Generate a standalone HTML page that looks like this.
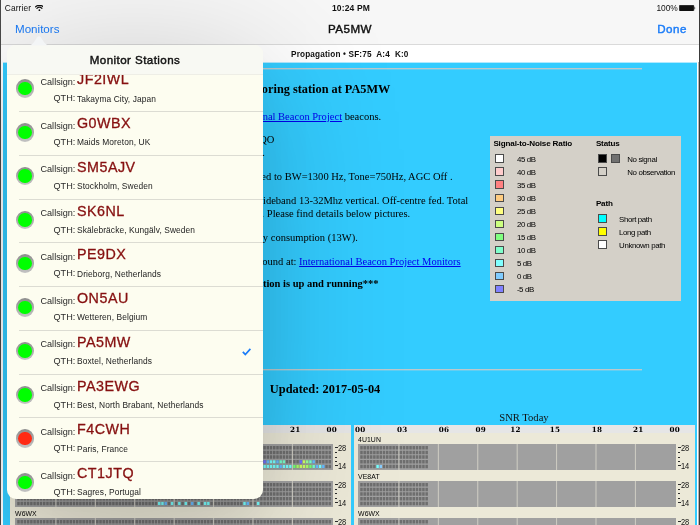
<!DOCTYPE html>
<html lang="en">
<head>
<meta charset="utf-8">
<title>PA5MW - Monitor Stations</title>
<style>
*{box-sizing:border-box;margin:0;padding:0}
html,body{width:700px;height:525px;overflow:hidden;background:#fff}
body{position:relative;font-family:"Liberation Sans",sans-serif;color:#000}
.abs{position:absolute}
body>*{will-change:transform}
#edgeL{left:0;top:0;width:1px;height:525px;background:#4a4a4a}
#edgeR{left:698px;top:0;width:2px;height:525px;background:linear-gradient(to right,#b4b4b4 0,#b4b4b4 1px,#3a3a3a 1px)}
#bar{left:1px;top:0;width:697.6px;height:44.9px;background:#f7f7f7;border-bottom:.8px solid #dadada}
#status{left:0;top:.8px;width:700px;height:14px;font-size:8.4px;line-height:14px;color:#111}
#status span{position:absolute;white-space:nowrap}
#nav span{position:absolute;white-space:nowrap;font-size:11.6px;line-height:14px}
.blue{color:#1b7cf8}
#prop{z-index:1;left:1px;top:45.2px;width:697.6px;height:17.4px;background:#fff;text-align:center;font-size:8.2px;letter-spacing:.17px;font-weight:bold;line-height:19.6px;color:#111;white-space:pre}
#web{left:3.2px;top:62.2px;width:693.8px;height:463px;background:#33ccff;overflow:hidden;font-family:"Liberation Serif",serif;font-size:10.52px;line-height:12.3px}
#web .l{position:absolute;white-space:nowrap}
#web a{color:#0000ee;text-decoration:underline}
.hr{position:absolute;height:2px;background:linear-gradient(#bcc8cb 0,#bcc8cb 1px,#64cdf0 1px)}
/* popover */
#pop{z-index:4;left:7.2px;top:45.2px;width:256px;height:453.6px;border-radius:9px;background:#fdfdf0;overflow:hidden;box-shadow:0 25px 140px rgba(0,0,0,.22),0 25px 50px rgba(0,0,0,.05)}
#pophead{left:0;top:0;width:256px;height:29.9px;background:#f8f9f3;z-index:3;text-align:center;font-weight:normal;-webkit-text-stroke:.42px #111;letter-spacing:.43px;font-size:11.6px;line-height:29px;color:#111;border-bottom:0.6px solid #eeeee6}
.row{position:absolute;left:0;width:256px;height:43.75px}
.row .sep{position:absolute;left:11.5px;right:0;bottom:0;height:0.7px;background:#dcdcd3}
.row .dot{position:absolute;left:8.7px;top:11.3px;width:18.4px;height:18.4px;border-radius:50%;background:linear-gradient(#8d8d8d,#c4c4c4);}
.row .dot i{position:absolute;left:2.5px;top:2.5px;width:13.4px;height:13.4px;border-radius:50%;background:#00ff00}
.row .dot.red i{background:#ff2a14}
.row .k1{position:absolute;left:33.5px;top:8.7px;font-size:9.1px;line-height:11px;color:#2a2a2a}
.row .cs{position:absolute;left:70px;top:3.3px;font-size:14.3px;line-height:16px;color:#861010;letter-spacing:.5px;-webkit-text-stroke:.3px #861010}
.row .k2{position:absolute;left:46.5px;top:25.2px;font-size:9.1px;line-height:11px;color:#2a2a2a}
.row .q{position:absolute;left:70px;top:25.4px;font-size:8.4px;line-height:10px;color:#222;letter-spacing:.1px}

/* legend */
#legend{position:absolute;left:486.7px;top:73.8px;width:191.2px;height:165.2px;background:#d4d0c8;font-family:"Liberation Sans",sans-serif;font-size:7.9px;line-height:9px;color:#000;letter-spacing:-.38px}
#legend b{position:absolute;white-space:nowrap;font-size:8.1px;letter-spacing:-.15px;margin-top:-.4px}
#legend span{position:absolute;white-space:nowrap}
#legend i{position:absolute;width:9px;height:8.7px;border:0.8px solid #4a4a4a;margin:.35px 0 0 -.4px}
/* charts */
#cl>*{margin-left:.5px}
.chart{position:absolute;overflow:hidden;height:170px;background:#ece9d8;font-family:"Liberation Sans",sans-serif}
.chead{position:absolute;left:0;top:0;width:100%;height:8.4px;background:#e6e6e6;font-family:"DejaVu Serif","Liberation Serif",serif;font-weight:bold;font-size:7.2px;line-height:9px;letter-spacing:.25px;color:#000}
.chead span{position:absolute;top:.1px}
.sname{position:absolute;left:4.4px;margin-top:.3px;font-size:6.9px;line-height:8px;color:#000;letter-spacing:.05px}
.plot{position:absolute;left:4.2px;background:#a0a0a0;display:block;margin-top:.3px}
.axis{position:absolute;left:322.6px;width:18px;height:26px;font-size:8.3px;line-height:9px;color:#111;letter-spacing:-.3px}
.axis b{position:absolute;left:1.6px;width:2.7px;height:0.7px;background:#2a2a2a}
.axis span{position:absolute;left:5.1px;transform:scaleX(.9);transform-origin:0 0;margin-top:.2px}
.ctitle{position:absolute;white-space:nowrap;font-size:10.6px;line-height:12px;text-align:center;color:#111}
</style>
</head>
<body>
<div id="edgeL" class="abs"></div><div id="edgeR" class="abs"></div>
<div id="bar" class="abs"></div>
<div id="status" class="abs">
  <span style="left:4.8px;letter-spacing:.1px">Carrier</span>
  <svg style="position:absolute;left:34.6px;top:3.6px;width:8.8px;height:6.2px" viewBox="0 0 88 62"><path d="M5 19 A56 56 0 0 1 83 19" fill="none" stroke="#111" stroke-width="12" stroke-linecap="round"/><path d="M19 34 A36 36 0 0 1 69 34" fill="none" stroke="#111" stroke-width="12" stroke-linecap="round"/><circle cx="44" cy="52" r="9" fill="#111"/></svg>
  <span style="left:326px;top:-.4px;width:50px;text-align:center;font-weight:bold;font-size:8.5px;letter-spacing:.15px">10:24 PM</span>
  <span style="left:656.4px">100%</span>
  <svg style="position:absolute;left:679.2px;top:3.8px;width:16.6px;height:6.2px" viewBox="0 0 166 62"><rect x="3" y="3" width="146" height="56" rx="8" fill="#111" stroke="#111" stroke-width="6"/><path d="M155 20 v22 q8 -2 8 -11 q0 -9 -8 -11z" fill="#111"/></svg>
</div>
<div id="nav" class="abs" style="left:0;top:0">
  <span class="blue" style="left:15px;top:22px">Monitors</span>
  <span style="left:300px;width:100px;text-align:center;top:22px;-webkit-text-stroke:.42px #111;letter-spacing:.45px;color:#111">PA5MW</span>
  <span class="blue" style="left:657.3px;top:22px;-webkit-text-stroke:.42px #1b7cf8;letter-spacing:.45px">Done</span>
</div>
<div id="prop" class="abs">Propagation • SF:75  A:4  K:0</div>

<div id="web" class="abs">
  <div style="position:absolute;left:0;top:0;width:100%;height:1px;background:#b0e9ff"></div>
  <div class="hr" style="left:55px;top:5.8px;width:584px"></div>
  <div class="l" style="right:306.4px;top:20.2px;font-size:12.3px;line-height:15px;font-weight:bold">Beacon monitoring station at PA5MW</div>
  <div class="l" style="right:315.6px;top:48.7px">Monitoring the <a>NCDXF/IARU International Beacon Project</a> beacons.</div>
  <div class="l" style="right:422.4px;top:72.3px">Location: Boxtel, The Netherlands, locator JO21QO</div>
  <div class="l" style="right:432px;top:84.6px">Station equipment is listed below.</div>
  <div class="l" style="right:244.2px;top:108.8px">Receiver settings are fixed to BW=1300 Hz, Tone=750Hz, AGC Off .</div>
  <div class="l" style="right:228.5px;top:133.1px">Antenna is a wideband 13-32Mhz vertical. Off-centre fed. Total</div>
  <div class="l" style="right:286.6px;top:145.8px">length is shown below. Please find details below pictures.</div>
  <div class="l" style="right:339px;top:170.3px">Computer: small fanless PC with low energy consumption (13W).</div>
  <div class="l" style="right:236.2px;top:194.1px">More monitoring stations can be found at: <a>International Beacon Project Monitors</a></div>
  <div class="l" style="right:318.2px;top:215.9px;font-weight:bold">***Monitoring station is up and running***</div>
  <div class="hr" style="left:55px;top:306.8px;width:584px"></div>
  <div class="l" style="left:266.8px;top:320.3px;font-size:12.4px;line-height:15px;font-weight:bold">Updated: 2017-05-04</div>
  <div id="legend">
    <b style="left:3.7px;top:3.6px">Signal-to-Noise Ratio</b>
    <i style="left:5.7px;top:18.3px;background:#ffffff"></i><span style="left:27.2px;top:18.9px">45 dB</span>
    <i style="left:5.7px;top:31.3px;background:#ffcccc"></i><span style="left:27.2px;top:31.9px">40 dB</span>
    <i style="left:5.7px;top:44.3px;background:#ff8080"></i><span style="left:27.2px;top:44.9px">35 dB</span>
    <i style="left:5.7px;top:57.4px;background:#ffcc80"></i><span style="left:27.2px;top:58.0px">30 dB</span>
    <i style="left:5.7px;top:70.4px;background:#ffff80"></i><span style="left:27.2px;top:71.0px">25 dB</span>
    <i style="left:5.7px;top:83.4px;background:#ccff80"></i><span style="left:27.2px;top:84.0px">20 dB</span>
    <i style="left:5.7px;top:96.4px;background:#80ff80"></i><span style="left:27.2px;top:97.0px">15 dB</span>
    <i style="left:5.7px;top:109.4px;background:#80ffcc"></i><span style="left:27.2px;top:110.0px">10 dB</span>
    <i style="left:5.7px;top:122.5px;background:#80ffff"></i><span style="left:27.2px;top:123.1px">5 dB</span>
    <i style="left:5.7px;top:135.5px;background:#80ccff"></i><span style="left:27.2px;top:136.1px">0 dB</span>
    <i style="left:5.7px;top:148.5px;background:#8080ff"></i><span style="left:27.2px;top:149.1px">-5 dB</span>
    <b style="left:106.2px;top:3.6px">Status</b>
    <i style="left:108.3px;top:18.3px;background:#000"></i><i style="left:121.3px;top:18.3px;background:#707070"></i><span style="left:137.6px;top:18.9px">No signal</span>
    <i style="left:108.3px;top:31.3px;background:#d4d0c8"></i><span style="left:137.6px;top:31.9px">No observation</span>
    <b style="left:106.2px;top:63.7px">Path</b>
    <i style="left:108.3px;top:78.3px;background:#00ffff"></i><span style="left:129.4px;top:78.9px">Short path</span>
    <i style="left:108.3px;top:91.3px;background:#ffff00"></i><span style="left:129.4px;top:91.9px">Long path</span>
    <i style="left:108.3px;top:104.3px;background:#ffffff"></i><span style="left:129.4px;top:104.9px">Unknown path</span>
  </div>
  <div class="ctitle" style="left:7.4px;width:340.6px;top:350px">SNR Yesterday</div>
  <div class="ctitle" style="left:350.7px;width:340.6px;top:350px">SNR Today</div>
<div class="chart" id="cl" style="left:7.2px;top:363.0px;width:340.9px">
<div class="chead">
<span style="left:1.3px">00</span>
<span style="left:43.4px">03</span>
<span style="left:85.1px">06</span>
<span style="left:121.9px">09</span>
<span style="left:156.6px">12</span>
<span style="left:196.1px">15</span>
<span style="left:238.1px">18</span>
<span style="left:279.4px">21</span>
<span style="left:315.9px">00</span>
</div>
<div class="sname" style="top:10.7px">4U1UN</div>
<svg class="plot" style="top:19.0px" width="317.9" height="26.1" viewBox="0 0 317.9 26.1">
<path d="M40.92 0v26.1M80.34 0v26.1M119.76 0v26.1M159.18 0v26.1M198.60 0v26.1M238.02 0v26.1M277.44 0v26.1" stroke="#d0cec4" stroke-width="1" fill="none"/>
<path d="M2.20 3.70h38.04M2.20 8.40h38.04M2.20 13.10h38.04M2.20 17.80h38.04M2.20 22.50h38.04M41.62 3.70h38.04M41.62 8.40h38.04M41.62 13.10h38.04M41.62 17.80h38.04M41.62 22.50h38.04M81.04 3.70h38.04M81.04 8.40h38.04M81.04 13.10h38.04M81.04 17.80h38.04M81.04 22.50h38.04M120.46 3.70h38.04M120.46 8.40h38.04M120.46 13.10h38.04M120.46 17.80h38.04M120.46 22.50h38.04M159.88 3.70h38.04M159.88 8.40h38.04M159.88 13.10h38.04M159.88 17.80h38.04M159.88 22.50h38.04M199.30 3.70h38.04M199.30 8.40h38.04M199.30 13.10h38.04M199.30 17.80h38.04M199.30 22.50h38.04M238.72 3.70h38.04M238.72 8.40h38.04M238.72 13.10h38.04M238.72 17.80h38.04M238.72 22.50h38.04M278.14 3.70h38.04M278.14 8.40h38.04M278.14 13.10h38.04M278.14 17.80h38.04M278.14 22.50h38.04" stroke="#6e6e6e" stroke-width="3.5" stroke-dasharray="2.5 0.72" fill="none"/>
<rect x="248.38" y="16.20" width="2.5" height="3.2" fill="#7070ff"/>
<rect x="251.60" y="16.20" width="2.5" height="3.2" fill="#66bbff"/>
<rect x="254.82" y="16.20" width="2.5" height="3.2" fill="#77ffff"/>
<rect x="258.04" y="16.20" width="2.5" height="3.2" fill="#77ffff"/>
<rect x="261.26" y="16.20" width="2.5" height="3.2" fill="#66bbff"/>
<rect x="264.48" y="16.20" width="2.5" height="3.2" fill="#77ffcc"/>
<rect x="267.70" y="16.20" width="2.5" height="3.2" fill="#77ffcc"/>
<rect x="284.58" y="16.20" width="2.5" height="3.2" fill="#7070ff"/>
<rect x="287.80" y="16.20" width="2.5" height="3.2" fill="#ccff66"/>
<rect x="291.02" y="16.20" width="2.5" height="3.2" fill="#99ff99"/>
<rect x="294.24" y="16.20" width="2.5" height="3.2" fill="#77ffcc"/>
<rect x="297.46" y="16.20" width="2.5" height="3.2" fill="#66bbff"/>
<rect x="238.72" y="20.90" width="2.5" height="3.2" fill="#77ffff"/>
<rect x="241.94" y="20.90" width="2.5" height="3.2" fill="#77ffff"/>
<rect x="245.16" y="20.90" width="2.5" height="3.2" fill="#66bbff"/>
<rect x="248.38" y="20.90" width="2.5" height="3.2" fill="#77ffff"/>
<rect x="251.60" y="20.90" width="2.5" height="3.2" fill="#77ffff"/>
<rect x="254.82" y="20.90" width="2.5" height="3.2" fill="#77ffff"/>
<rect x="258.04" y="20.90" width="2.5" height="3.2" fill="#77ffff"/>
<rect x="261.26" y="20.90" width="2.5" height="3.2" fill="#77ffff"/>
<rect x="264.48" y="20.90" width="2.5" height="3.2" fill="#66bbff"/>
<rect x="267.70" y="20.90" width="2.5" height="3.2" fill="#77ffff"/>
<rect x="270.92" y="20.90" width="2.5" height="3.2" fill="#77ffff"/>
<rect x="274.14" y="20.90" width="2.5" height="3.2" fill="#77ffff"/>
<rect x="278.14" y="20.90" width="2.5" height="3.2" fill="#77ff77"/>
<rect x="281.36" y="20.90" width="2.5" height="3.2" fill="#aaff66"/>
<rect x="284.58" y="20.90" width="2.5" height="3.2" fill="#ccff66"/>
<rect x="287.80" y="20.90" width="2.5" height="3.2" fill="#ccff66"/>
<rect x="291.02" y="20.90" width="2.5" height="3.2" fill="#aaff66"/>
<rect x="294.24" y="20.90" width="2.5" height="3.2" fill="#77ff77"/>
<rect x="297.46" y="20.90" width="2.5" height="3.2" fill="#77ffcc"/>
<rect x="300.68" y="20.90" width="2.5" height="3.2" fill="#66bbff"/>
<rect x="303.90" y="20.90" width="2.5" height="3.2" fill="#77ffff"/>
<rect x="307.12" y="20.90" width="2.5" height="3.2" fill="#66bbff"/>
</svg>
<div class="axis" style="top:19.0px"><b style="top:3px"></b><b style="top:7.8px;width:2.4px"></b><b style="top:12.6px;width:2.4px"></b><b style="top:17.1px;width:2.4px"></b><b style="top:21.4px"></b><span style="top:-.3px">28</span><span style="top:18px">14</span></div>
<div class="sname" style="top:47.6px">VE8AT</div>
<svg class="plot" style="top:55.9px" width="317.9" height="26.1" viewBox="0 0 317.9 26.1">
<path d="M40.92 0v26.1M80.34 0v26.1M119.76 0v26.1M159.18 0v26.1M198.60 0v26.1M238.02 0v26.1M277.44 0v26.1" stroke="#d0cec4" stroke-width="1" fill="none"/>
<path d="M2.20 3.70h38.04M2.20 8.40h38.04M2.20 13.10h38.04M2.20 17.80h38.04M2.20 22.50h38.04M41.62 3.70h38.04M41.62 8.40h38.04M41.62 13.10h38.04M41.62 17.80h38.04M41.62 22.50h38.04M81.04 3.70h38.04M81.04 8.40h38.04M81.04 13.10h38.04M81.04 17.80h38.04M81.04 22.50h38.04M120.46 3.70h38.04M120.46 8.40h38.04M120.46 13.10h38.04M120.46 17.80h38.04M120.46 22.50h38.04M159.88 3.70h38.04M159.88 8.40h38.04M159.88 13.10h38.04M159.88 17.80h38.04M159.88 22.50h38.04M199.30 3.70h38.04M199.30 8.40h38.04M199.30 13.10h38.04M199.30 17.80h38.04M199.30 22.50h38.04M238.72 3.70h38.04M238.72 8.40h38.04M238.72 13.10h38.04M238.72 17.80h38.04M238.72 22.50h38.04M278.14 3.70h38.04M278.14 8.40h38.04M278.14 13.10h38.04M278.14 17.80h38.04M278.14 22.50h38.04" stroke="#6e6e6e" stroke-width="3.5" stroke-dasharray="2.5 0.72" fill="none"/>
<rect x="143.00" y="20.90" width="2.5" height="3.2" fill="#77ffff"/>
<rect x="146.22" y="20.90" width="2.5" height="3.2" fill="#77ffff"/>
<rect x="149.44" y="20.90" width="2.5" height="3.2" fill="#66bbff"/>
<rect x="155.88" y="20.90" width="2.5" height="3.2" fill="#77ffff"/>
<rect x="163.10" y="20.90" width="2.5" height="3.2" fill="#77ffff"/>
<rect x="169.54" y="20.90" width="2.5" height="3.2" fill="#77ffff"/>
<rect x="175.98" y="20.90" width="2.5" height="3.2" fill="#66bbff"/>
<rect x="182.42" y="20.90" width="2.5" height="3.2" fill="#77ffff"/>
<rect x="188.86" y="20.90" width="2.5" height="3.2" fill="#77ffff"/>
<rect x="192.08" y="20.90" width="2.5" height="3.2" fill="#77ffff"/>
<rect x="228.28" y="20.90" width="2.5" height="3.2" fill="#77ffff"/>
<rect x="231.50" y="20.90" width="2.5" height="3.2" fill="#66bbff"/>
<rect x="241.94" y="20.90" width="2.5" height="3.2" fill="#77ffff"/>
</svg>
<div class="axis" style="top:55.9px"><b style="top:3px"></b><b style="top:7.8px;width:2.4px"></b><b style="top:12.6px;width:2.4px"></b><b style="top:17.1px;width:2.4px"></b><b style="top:21.4px"></b><span style="top:-.3px">28</span><span style="top:18px">14</span></div>
<div class="sname" style="top:84.5px">W6WX</div>
<svg class="plot" style="top:92.8px" width="317.9" height="26.1" viewBox="0 0 317.9 26.1">
<path d="M40.92 0v26.1M80.34 0v26.1M119.76 0v26.1M159.18 0v26.1M198.60 0v26.1M238.02 0v26.1M277.44 0v26.1" stroke="#d0cec4" stroke-width="1" fill="none"/>
<path d="M2.20 3.70h38.04M2.20 8.40h38.04M2.20 13.10h38.04M2.20 17.80h38.04M2.20 22.50h38.04M41.62 3.70h38.04M41.62 8.40h38.04M41.62 13.10h38.04M41.62 17.80h38.04M41.62 22.50h38.04M81.04 3.70h38.04M81.04 8.40h38.04M81.04 13.10h38.04M81.04 17.80h38.04M81.04 22.50h38.04M120.46 3.70h38.04M120.46 8.40h38.04M120.46 13.10h38.04M120.46 17.80h38.04M120.46 22.50h38.04M159.88 3.70h38.04M159.88 8.40h38.04M159.88 13.10h38.04M159.88 17.80h38.04M159.88 22.50h38.04M199.30 3.70h38.04M199.30 8.40h38.04M199.30 13.10h38.04M199.30 17.80h38.04M199.30 22.50h38.04M238.72 3.70h38.04M238.72 8.40h38.04M238.72 13.10h38.04M238.72 17.80h38.04M238.72 22.50h38.04M278.14 3.70h38.04M278.14 8.40h38.04M278.14 13.10h38.04M278.14 17.80h38.04M278.14 22.50h38.04" stroke="#6e6e6e" stroke-width="3.5" stroke-dasharray="2.5 0.72" fill="none"/>
</svg>
<div class="axis" style="top:92.8px"><b style="top:3px"></b><b style="top:7.8px;width:2.4px"></b><b style="top:12.6px;width:2.4px"></b><b style="top:17.1px;width:2.4px"></b><b style="top:21.4px"></b><span style="top:-.3px">28</span><span style="top:18px">14</span></div>
</div>
<div class="chart" id="cr" style="left:350.7px;top:363.0px;width:340.9px">
<div class="chead">
<span style="left:1.3px">00</span>
<span style="left:43.4px">03</span>
<span style="left:85.1px">06</span>
<span style="left:121.9px">09</span>
<span style="left:156.6px">12</span>
<span style="left:196.1px">15</span>
<span style="left:238.1px">18</span>
<span style="left:279.4px">21</span>
<span style="left:315.9px">00</span>
</div>
<div class="sname" style="top:10.7px">4U1UN</div>
<svg class="plot" style="top:19.0px" width="317.9" height="26.1" viewBox="0 0 317.9 26.1">
<path d="M40.92 0v26.1M80.34 0v26.1M119.76 0v26.1M159.18 0v26.1M198.60 0v26.1M238.02 0v26.1M277.44 0v26.1" stroke="#d0cec4" stroke-width="1" fill="none"/>
<path d="M2.20 3.70h38.04M2.20 8.40h38.04M2.20 13.10h38.04M2.20 17.80h38.04M2.20 22.50h38.04M41.62 3.70h28.38M41.62 8.40h28.38M41.62 13.10h28.38M41.62 17.80h28.38M41.62 22.50h28.38" stroke="#6e6e6e" stroke-width="3.5" stroke-dasharray="2.5 0.72" fill="none"/>
<rect x="18.30" y="20.90" width="2.5" height="3.2" fill="#7ff"/>
<rect x="21.52" y="20.90" width="2.5" height="3.2" fill="#8cf"/>
</svg>
<div class="axis" style="top:19.0px"><b style="top:3px"></b><b style="top:7.8px;width:2.4px"></b><b style="top:12.6px;width:2.4px"></b><b style="top:17.1px;width:2.4px"></b><b style="top:21.4px"></b><span style="top:-.3px">28</span><span style="top:18px">14</span></div>
<div class="sname" style="top:47.6px">VE8AT</div>
<svg class="plot" style="top:55.9px" width="317.9" height="26.1" viewBox="0 0 317.9 26.1">
<path d="M40.92 0v26.1M80.34 0v26.1M119.76 0v26.1M159.18 0v26.1M198.60 0v26.1M238.02 0v26.1M277.44 0v26.1" stroke="#d0cec4" stroke-width="1" fill="none"/>
<path d="M2.20 3.70h38.04M2.20 8.40h38.04M2.20 13.10h38.04M2.20 17.80h38.04M2.20 22.50h38.04M41.62 3.70h28.38M41.62 8.40h28.38M41.62 13.10h28.38M41.62 17.80h28.38M41.62 22.50h28.38" stroke="#6e6e6e" stroke-width="3.5" stroke-dasharray="2.5 0.72" fill="none"/>
</svg>
<div class="axis" style="top:55.9px"><b style="top:3px"></b><b style="top:7.8px;width:2.4px"></b><b style="top:12.6px;width:2.4px"></b><b style="top:17.1px;width:2.4px"></b><b style="top:21.4px"></b><span style="top:-.3px">28</span><span style="top:18px">14</span></div>
<div class="sname" style="top:84.5px">W6WX</div>
<svg class="plot" style="top:92.8px" width="317.9" height="26.1" viewBox="0 0 317.9 26.1">
<path d="M40.92 0v26.1M80.34 0v26.1M119.76 0v26.1M159.18 0v26.1M198.60 0v26.1M238.02 0v26.1M277.44 0v26.1" stroke="#d0cec4" stroke-width="1" fill="none"/>
<path d="M2.20 3.70h38.04M2.20 8.40h38.04M2.20 13.10h38.04M2.20 17.80h38.04M2.20 22.50h38.04M41.62 3.70h28.38M41.62 8.40h28.38M41.62 13.10h28.38M41.62 17.80h28.38M41.62 22.50h28.38" stroke="#6e6e6e" stroke-width="3.5" stroke-dasharray="2.5 0.72" fill="none"/>
</svg>
<div class="axis" style="top:92.8px"><b style="top:3px"></b><b style="top:7.8px;width:2.4px"></b><b style="top:12.6px;width:2.4px"></b><b style="top:17.1px;width:2.4px"></b><b style="top:21.4px"></b><span style="top:-.3px">28</span><span style="top:18px">14</span></div>
</div>
</div>

<svg class="abs" style="left:26px;top:35px;width:26px;height:11px;z-index:5" viewBox="0 0 26 11"><path d="M2.5 10.5 C7 10.5 9.5 4.5 11.2 2.3 Q13 0.2 14.8 2.3 C16.5 4.5 19 10.5 23.5 10.5 Z" fill="#f3f5f6"/></svg>
<div id="pop" class="abs">
  <div class="row" style="top:23.15px"><span class="dot"><i></i></span><span class="k1">Callsign:</span><span class="cs">JF2IWL</span><span class="k2">QTH:</span><span class="q">Takayma City, Japan</span><span class="sep"></span></div>
  <div class="row" style="top:66.90px"><span class="dot"><i></i></span><span class="k1">Callsign:</span><span class="cs">G0WBX</span><span class="k2">QTH:</span><span class="q">Maids Moreton, UK</span><span class="sep"></span></div>
  <div class="row" style="top:110.65px"><span class="dot"><i></i></span><span class="k1">Callsign:</span><span class="cs">SM5AJV</span><span class="k2">QTH:</span><span class="q">Stockholm, Sweden</span><span class="sep"></span></div>
  <div class="row" style="top:154.40px"><span class="dot"><i></i></span><span class="k1">Callsign:</span><span class="cs">SK6NL</span><span class="k2">QTH:</span><span class="q">Skälebräcke, Kungälv, Sweden</span><span class="sep"></span></div>
  <div class="row" style="top:198.15px"><span class="dot"><i></i></span><span class="k1">Callsign:</span><span class="cs">PE9DX</span><span class="k2">QTH:</span><span class="q">Drieborg, Netherlands</span><span class="sep"></span></div>
  <div class="row" style="top:241.90px"><span class="dot"><i></i></span><span class="k1">Callsign:</span><span class="cs">ON5AU</span><span class="k2">QTH:</span><span class="q">Wetteren, Belgium</span><span class="sep"></span></div>
  <div class="row" style="top:285.65px"><span class="dot"><i></i></span><span class="k1">Callsign:</span><span class="cs">PA5MW</span><span class="k2">QTH:</span><span class="q">Boxtel, Netherlands</span><svg class="chk" viewBox="0 0 12 10" style="position:absolute;left:235.4px;top:17.4px;width:9.2px;height:7.6px"><path d="M1 5.2 L4.3 8.5 L11 1.2" fill="none" stroke="#1b7cf8" stroke-width="2.2"/></svg><span class="sep"></span></div>
  <div class="row" style="top:329.40px"><span class="dot"><i></i></span><span class="k1">Callsign:</span><span class="cs">PA3EWG</span><span class="k2">QTH:</span><span class="q">Best, North Brabant, Netherlands</span><span class="sep"></span></div>
  <div class="row" style="top:373.15px"><span class="dot red"><i></i></span><span class="k1">Callsign:</span><span class="cs">F4CWH</span><span class="k2">QTH:</span><span class="q">Paris, France</span><span class="sep"></span></div>
  <div class="row" style="top:416.90px"><span class="dot"><i></i></span><span class="k1">Callsign:</span><span class="cs">CT1JTQ</span><span class="k2">QTH:</span><span class="q">Sagres, Portugal</span><span class="sep"></span></div>
  <div id="pophead" class="abs">Monitor Stations</div>
</div>
</body>
</html>
